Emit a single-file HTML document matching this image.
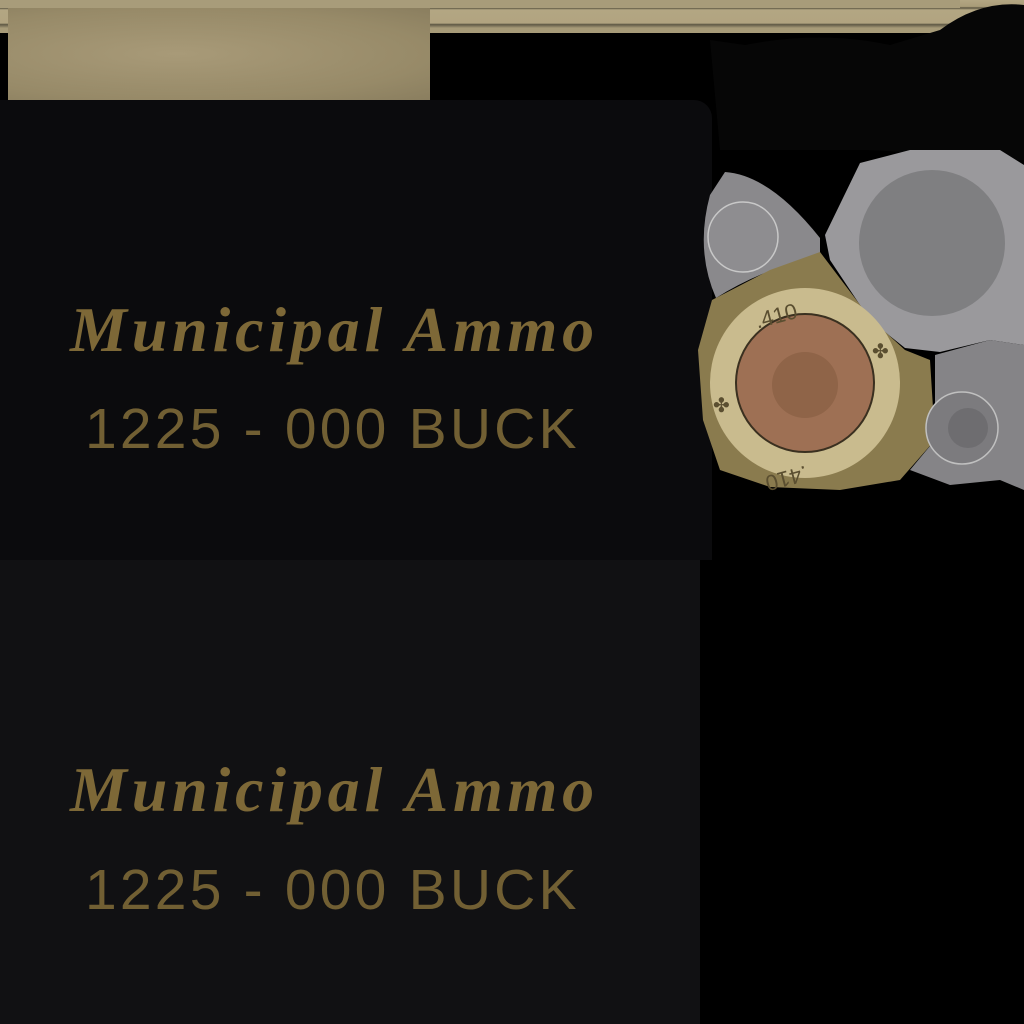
<!DOCTYPE html>
<html><head><style>
html,body{margin:0;padding:0;background:#000;width:1024px;height:1024px;overflow:hidden;position:relative}
div{position:absolute}
.t1{font-family:"Liberation Serif",serif;font-weight:bold;font-style:italic;font-size:64px;line-height:1;color:#7d6837;letter-spacing:4.8px;white-space:nowrap}
.t2{font-family:"Liberation Sans",sans-serif;font-size:57px;line-height:1;color:#715f33;letter-spacing:3.2px;white-space:nowrap}
</style></head><body>
<div style="left:0;top:0;width:1024px;height:33px;background:linear-gradient(#b3a683,#a99c78 20%,#5a5440 24%,#b3a683 30%,#b1a480 70%,#5e5844 74%,#a79b78 85%)"></div>
<div style="left:0;top:0;width:960px;height:8px;background:#a89c7a"></div>
<div style="left:8px;top:8px;width:422px;height:92px;background:radial-gradient(ellipse at 40% 50%,#a89a78,#978a68 70%,#8a7e5f)"></div>
<div style="left:0;top:100px;width:712px;height:460px;background:#0b0b0d;border-radius:0 18px 0 0"></div>
<div style="left:0;top:560px;width:700px;height:464px;background:#111113"></div>
<div style="left:700px;top:560px;width:324px;height:464px;background:#000"></div>
<svg style="position:absolute;left:0;top:0" width="1024" height="1024">
<path d="M710 40 L745 45 Q820 30 890 45 L940 30 Q980 0 1024 5 L1024 160 L960 160 Q900 150 860 150 L720 150 Z" fill="#060606"/>
<path d="M725 172 Q770 175 820 238 L820 255 Q760 270 716 298 Q695 250 710 195 Z" fill="#8a898c"/>
<circle cx="743" cy="237" r="35" fill="#8e8d90" stroke="#c8c8c8" stroke-width="1.5"/>
<polygon points="825,235 860,163 910,150 1000,150 1024,165 1024,345 990,340 940,352 905,348 870,320 830,260" fill="#9a999c"/>
<circle cx="932" cy="243" r="73" fill="#7f7f81"/>
<polygon points="820,252 870,318 905,350 930,360 935,440 900,480 840,490 770,487 720,470 703,420 698,350 712,300 770,270" fill="#8a7b4e"/>
<circle cx="805" cy="383" r="95" fill="#c9bb8e"/>
<circle cx="805" cy="383" r="69" fill="#9e7054" stroke="#3a3020" stroke-width="2"/>
<circle cx="805" cy="385" r="33" fill="#8f6448"/>
<polygon points="935,355 990,340 1024,345 1024,490 1000,480 950,485 910,470 935,440" fill="#858487"/>
<circle cx="962" cy="428" r="36" fill="#7c7b7e" stroke="#c0c0c0" stroke-width="1.5"/>
<circle cx="968" cy="428" r="20" fill="#6e6d70"/>
<text x="755" y="325" font-family="Liberation Sans" font-size="22" fill="#5a4e30" transform="rotate(-15 770 318)">.410</text>
<text x="840" y="455" font-family="Liberation Sans" font-size="22" fill="#5a4e30" transform="rotate(165 822 458)">.410</text>
<text x="872" y="358" font-family="Liberation Sans" font-size="20" fill="#5a4e30">✤</text>
<text x="713" y="412" font-family="Liberation Sans" font-size="20" fill="#5a4e30">✤</text>
</svg>
<div class="t1" style="left:70px;top:298px">Municipal Ammo</div>
<div class="t2" style="left:85px;top:401px">1225 - 000 BUCK</div>
<div class="t1" style="left:70px;top:758px">Municipal Ammo</div>
<div class="t2" style="left:85px;top:862px">1225 - 000 BUCK</div>
</body></html>
